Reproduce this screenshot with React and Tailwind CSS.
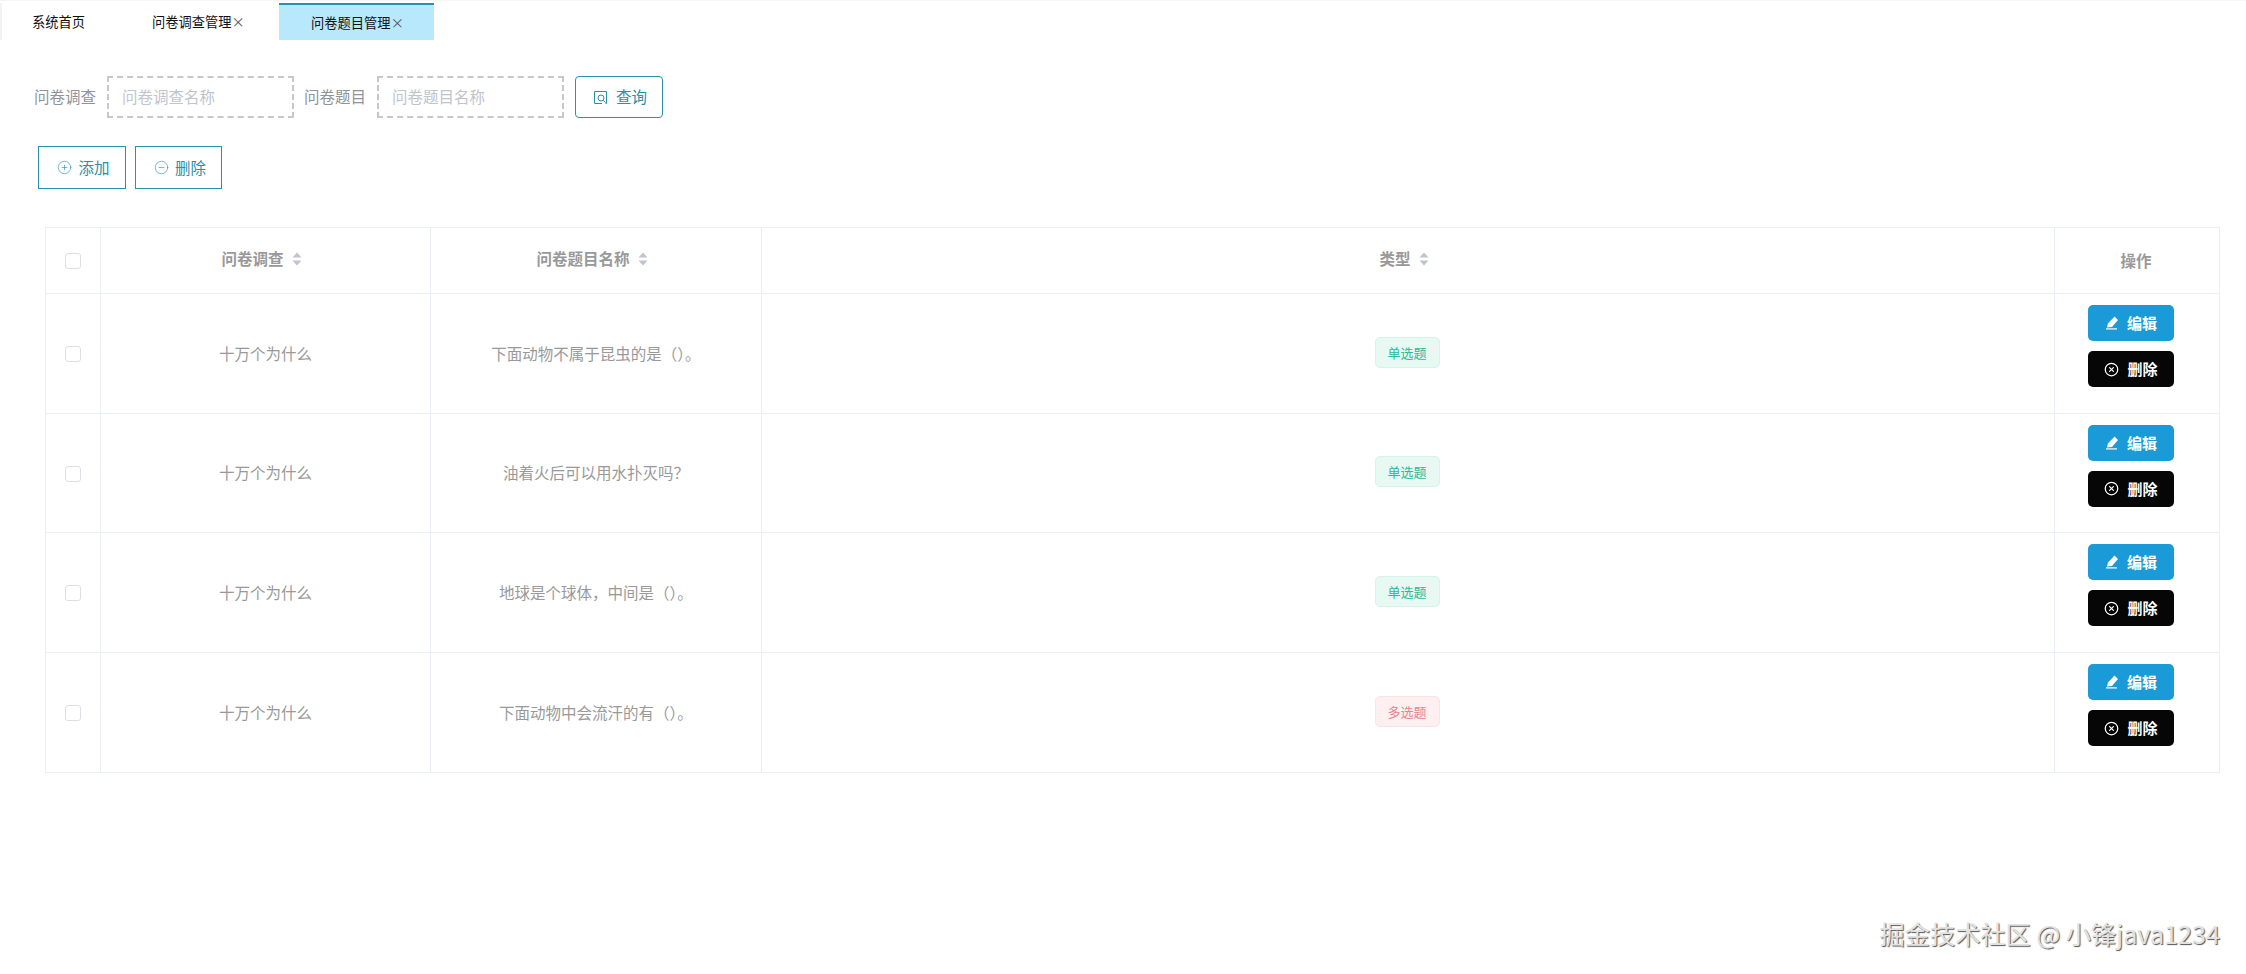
import React from "react";
import { CirclePlus, CircleMinus, CircleX } from "lucide-react";

const rows = [
  { survey: "十万个为什么", title: "下面动物不属于昆虫的是（）。", type: "单选题" },
  { survey: "十万个为什么", title: "油着火后可以用水扑灭吗？", type: "单选题" },
  { survey: "十万个为什么", title: "地球是个球体，中间是（）。", type: "单选题" },
  { survey: "十万个为什么", title: "下面动物中会流汗的有（）。", type: "多选题" },
];

const columns = "grid grid-cols-[55px_330px_331px_1293px_1fr]";
const cell = "flex items-center justify-center border-r border-[#ebeef5] last:border-r-0";

const SortCaret = () => (
  <svg width="10" height="14" viewBox="0 0 10 14" className="ml-2 mt-px">
    <path d="M5 0.5 L9.5 5.5 L0.5 5.5 Z" fill="#c0c4cc" />
    <path d="M5 13.5 L9.5 8.5 L0.5 8.5 Z" fill="#c0c4cc" />
  </svg>
);

const SearchIcon = () => (
  <svg width="15" height="15" viewBox="0 0 15 15" fill="none" stroke="#2a8fa8" strokeWidth="1">
    <path d="M9 13.5 H1.5 V1.5 H13.5 V13.5 H12.5" />
    <circle cx="8" cy="8" r="3" />
    <path d="M10.2 10.2 L12.5 12.5" />
  </svg>
);

const EditIcon = () => (
  <svg width="14" height="14" viewBox="0 0 14 14" fill="#fff">
    <path d="M9.5 0.5 L13 4 L7 11 L2 11.5 L3 7.5 Z" />
    <rect x="1" y="12.3" width="11" height="1.2" />
  </svg>
);

const Checkbox = () => <span className="block w-4 h-4 rounded-[3px] border border-[#dcdfe6] bg-white" />;

const Tag = ({ type }) => (
  <span
    className={
      type === "多选题"
        ? "flex items-center justify-center w-[65px] h-[31px] mb-[2px] mr-[2px] rounded-[5px] border border-[#fde2e2] bg-[#fef0f0] text-[13px] text-[#e6838f]"
        : "flex items-center justify-center w-[65px] h-[31px] mb-[2px] mr-[2px] rounded-[5px] border border-[#d4f3ea] bg-[#e8f9f4] text-[13px] text-[#2fb99a]"
    }
  >
    {type}
  </span>
);

export default function App() {
  return (
    <div className="relative w-[2246px] h-[974px] bg-white overflow-hidden text-[15.5px] font-['Noto_Sans_CJK_SC','Noto_Sans',sans-serif]">
      <div className="flex h-[40px] pt-[2px] border-t border-[#f5f5f5] text-[13.25px] text-[#111]">
        <div className="flex items-center w-[114px] pl-[30px] border-l-2 border-[#f2f2f2]">系统首页</div>
        <div className="flex items-center w-[165px] pl-[38px]">
          问卷调查管理<span className="text-[#555]">×</span>
        </div>
        <div className="flex items-center justify-center w-[155px] pl-[2px] bg-[#b8e8fc] border-t-2 border-[#2a8fa8]">
          问卷题目管理<span className="text-[#555]">×</span>
        </div>
      </div>

      <div className="flex items-center h-[42px] mt-[36px] pl-[34px]">
        <label className="text-[#909399] w-[73px]">问卷调查</label>
        <div className="flex items-center w-[187px] h-full pl-[13px] border-2 border-dashed border-[#c8c8c8] text-[#c0c4cc]">
          问卷调查名称
        </div>
        <label className="text-[#909399] w-[83px] pl-[10px]">问卷题目</label>
        <div className="flex items-center w-[187px] h-full pl-[13px] border-2 border-dashed border-[#c8c8c8] text-[#c0c4cc]">
          问卷题目名称
        </div>
        <button className="flex items-center justify-center gap-[8px] w-[88px] h-full ml-[11px] pl-[2px] rounded-[4px] border border-[#2a8fa8] text-[#2a8fa8]">
          <SearchIcon />
          查询
        </button>
      </div>

      <div className="flex gap-[9px] mt-[28px] ml-[38px] text-[#2a8fa8]">
        <button className="flex items-center justify-center gap-[6px] w-[88px] h-[43px] pl-[3px] border border-[#2a8fa8]">
          <CirclePlus size={15} strokeWidth={1} />
          添加
        </button>
        <button className="flex items-center justify-center gap-[6px] w-[87px] h-[43px] pl-[3px] border border-[#2a8fa8]">
          <CircleMinus size={15} strokeWidth={1} />
          删除
        </button>
      </div>

      <div className="w-[2175px] mt-[38px] ml-[45px] border border-[#ebeef5] text-[#999]">
        <div className={`${columns} h-[66px] border-b border-[#ebeef5] font-bold`}>
          <div className={cell}><Checkbox /></div>
          <div className={`${cell} pb-[4px] pr-[8px]`}>问卷调查<SortCaret /></div>
          <div className={`${cell} pb-[4px] pr-[8px]`}>问卷题目名称<SortCaret /></div>
          <div className={`${cell} pb-[4px] pr-[8px]`}>类型<SortCaret /></div>
          <div className={`${cell} pr-[2px]`}>操作</div>
        </div>
        {rows.map((row, i) => (
          <div key={i} className={`${columns} h-[119.5px] border-b border-[#ebeef5] last:border-b-0`}>
            <div className={`${cell} pt-[2px]`}><Checkbox /></div>
            <div className={cell}>{row.survey}</div>
            <div className={cell}>{row.title}</div>
            <div className={cell}><Tag type={row.type} /></div>
            <div className={`${cell} flex-col gap-[10px] pr-[12px] pb-[14px]`}>
              <button className="flex items-center justify-center gap-[8px] w-[86px] h-[36px] rounded-[5px] bg-[#1a9ad6] text-white font-bold text-[15px]">
                <EditIcon />
                编辑
              </button>
              <button className="flex items-center justify-center gap-[8px] w-[86px] h-[36px] rounded-[5px] bg-[#060606] text-white font-bold text-[15px]">
                <CircleX size={15} />
                删除
              </button>
            </div>
          </div>
        ))}
      </div>

      <div className="absolute right-[26px] top-[915px] text-[25.2px] leading-[36px] text-[#e2e2e2] [text-shadow:1px_1px_1px_#555]">
        掘金技术社区 @ 小锋java1234
      </div>
    </div>
  );
}
